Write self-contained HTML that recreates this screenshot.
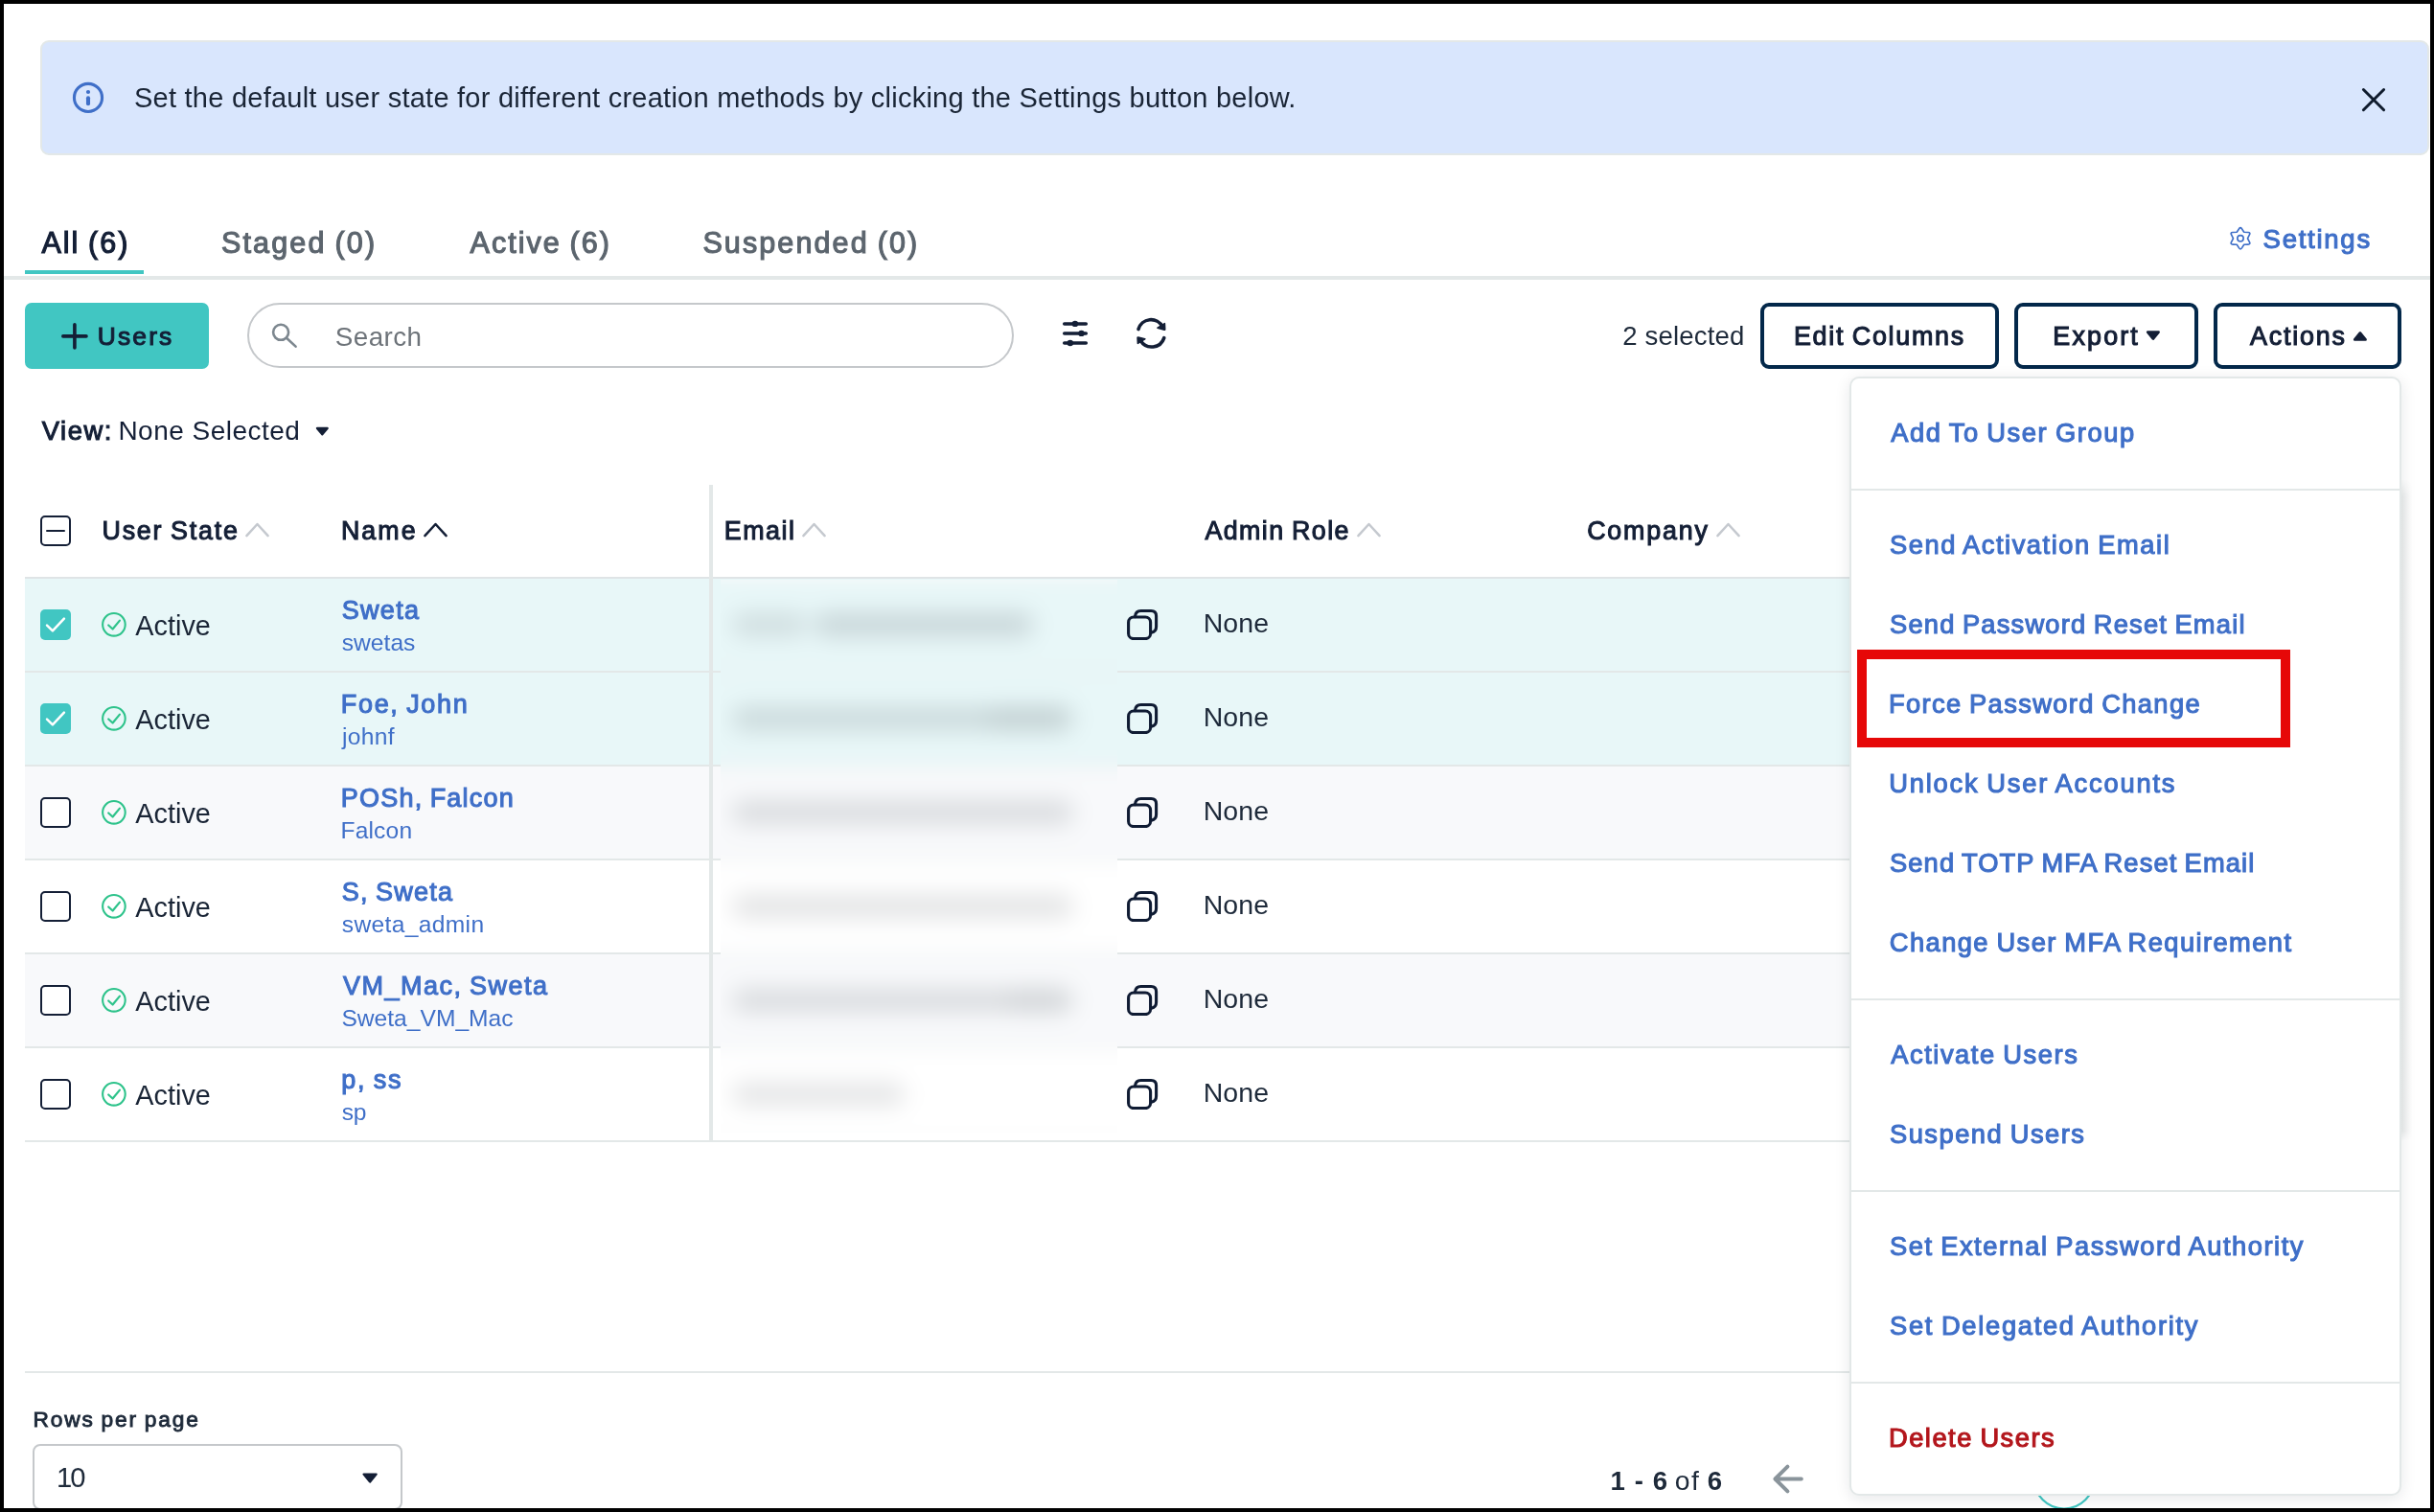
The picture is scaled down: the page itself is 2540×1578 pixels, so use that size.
<!DOCTYPE html>
<html>
<head>
<meta charset="utf-8">
<title>Users</title>
<style>
*{box-sizing:border-box;margin:0;padding:0}
html,body{width:2540px;height:1578px;overflow:hidden;background:#fff}
body{font-family:"Liberation Sans",sans-serif;color:#141f36;position:relative}
.abs{position:absolute}
.t{position:absolute;white-space:pre;line-height:1}
#frame{position:absolute;left:0;top:0;width:2540px;height:1578px;border:4px solid #000;z-index:100}
#page{position:absolute;left:0;top:0;width:2540px;height:1578px;overflow:hidden;will-change:transform}
</style>
</head>
<body>
<div id="page">
<!-- banner -->
<div class="abs" style="left:42px;top:42px;width:2493px;height:120px;background:#d9e6fd;border:2px solid #e3e8e8;border-radius:9px;"></div>
<svg class="abs" style="left:72px;top:82px;" width="40" height="40" viewBox="0 0 40 40" fill="none"><circle cx="20" cy="19.9" r="14.55" stroke="#3f6fc8" stroke-width="3.1"/><circle cx="20" cy="14" r="2.1" fill="#3f6fc8"/><path d="M20 20.3V26.2" stroke="#3f6fc8" stroke-width="4.1" stroke-linecap="round"/></svg>
<div class="t" style="left:139.98px;top:87.75px;font-size:29px;color:#1a2536;letter-spacing:0.245px;">Set the default user state for different creation methods by clicking the Settings button below.</div>
<svg class="abs" style="left:2457px;top:84px;" width="40" height="40" viewBox="0 0 40 40" fill="none"><path d="M9.4 9.5L30.6 30.7M30.6 9.5L9.4 30.7" stroke="#0f1b2d" stroke-width="3" stroke-linecap="round"/></svg>
<!-- tabs -->
<div class="abs" style="left:4px;top:288px;width:2532px;height:4px;background:#e3e8e8;"></div>
<div class="abs" style="left:26px;top:281.7px;width:124px;height:4.4px;background:#41c6c2;"></div>
<div class="t" style="left:43.52px;top:238.31px;font-size:30.5px;color:#141f36;-webkit-text-stroke:1.15px #141f36;letter-spacing:1.972px;word-spacing:-1.68px;">All (6)</div>
<div class="t" style="left:230.99px;top:238.31px;font-size:30.5px;color:#5c656e;-webkit-text-stroke:1.15px #5c656e;letter-spacing:2.154px;word-spacing:-1.68px;">Staged (0)</div>
<div class="t" style="left:490.52px;top:238.31px;font-size:30.5px;color:#5c656e;-webkit-text-stroke:1.15px #5c656e;letter-spacing:2.019px;word-spacing:-1.68px;">Active (6)</div>
<div class="t" style="left:733.39px;top:238.31px;font-size:30.5px;color:#5c656e;-webkit-text-stroke:1.15px #5c656e;letter-spacing:2.118px;word-spacing:-1.68px;">Suspended (0)</div>
<svg class="abs" style="left:2326px;top:236px;" width="24" height="26" viewBox="0 0 24 26" fill="none"><path d="M8.25 6.30 L10.58 2.71 Q12.00 0.50 13.43 2.71 L15.75 6.30 L20.03 6.52 Q22.65 6.65 21.45 8.99 L19.50 12.80 L21.45 16.61 Q22.65 18.95 20.03 19.08 L15.75 19.30 L13.43 22.89 Q12.00 25.10 10.58 22.89 L8.25 19.30 L3.97 19.08 Q1.35 18.95 2.55 16.61 L4.50 12.80 L2.55 8.99 Q1.35 6.65 3.97 6.52 Z" stroke="#3f6fc8" stroke-width="1.65" stroke-linejoin="round"/><circle cx="12" cy="12.8" r="3.15" stroke="#3f6fc8" stroke-width="1.65"/></svg>
<div class="t" style="left:2361.60px;top:235.77px;font-size:27.5px;color:#3f6fc8;-webkit-text-stroke:1.10px #3f6fc8;letter-spacing:1.740px;">Settings</div>
<!-- toolbar -->
<div class="abs" style="left:26px;top:316px;width:192px;height:68.6px;background:#41c6c2;border-radius:7px;"></div>
<svg class="abs" style="left:58px;top:331px;" width="40" height="40" viewBox="0 0 40 40" fill="none"><path d="M7.8 19.9H32M19.9 7.8V32" stroke="#141f36" stroke-width="3.6" stroke-linecap="round"/></svg>
<div class="t" style="left:101.69px;top:337.72px;font-size:26.4px;color:#141f36;-webkit-text-stroke:1.06px #141f36;letter-spacing:2.174px;">Users</div>
<div class="abs" style="left:258px;top:316px;width:800px;height:68px;background:#fff;border:2px solid #c5c8cb;border-radius:34px;"></div>
<svg class="abs" style="left:278px;top:332px;" width="40" height="40" viewBox="0 0 40 40" fill="none"><circle cx="15.1" cy="14.8" r="8" stroke="#7d878f" stroke-width="2.6"/><path d="M21 20.8L30.6 29.6" stroke="#7d878f" stroke-width="2.6" stroke-linecap="round"/></svg>
<div class="t" style="left:349.84px;top:337.67px;font-size:27.8px;color:#6d7379;letter-spacing:0.417px;">Search</div>
<svg class="abs" style="left:1102px;top:328px;" width="40" height="40" viewBox="0 0 40 40" fill="none"><path d="M8.7 9.9H31.3M8.7 19.9H31.3M8.7 30H31.3" stroke="#141f36" stroke-width="3.5" stroke-linecap="round"/><circle cx="19.9" cy="9.9" r="3.2" fill="#141f36"/><circle cx="26.5" cy="19.9" r="3.2" fill="#141f36"/><circle cx="14.8" cy="30" r="3.2" fill="#141f36"/></svg>
<svg class="abs" style="left:1181px;top:328px;" width="40" height="40" viewBox="0 0 40 40" fill="none"><g transform="translate(20.4,20)"><path d="M-13.4 -4.4A13.6 13.6 0 0 1 11.8 -7" stroke="#141f36" stroke-width="3.6" stroke-linecap="round"/><path d="M14.0 -10.3L14.3 -4.5Q14.4 -3.7 13.6 -3.9L6.6 -5.7Z" fill="#141f36" stroke="#141f36" stroke-width="1.6" stroke-linejoin="round"/><path d="M13.4 4.6A13.6 13.6 0 0 1 -11.2 7.4" stroke="#141f36" stroke-width="3.6" stroke-linecap="round"/><path d="M-14.0 10.4L-14.3 4.6Q-14.4 3.8 -13.6 4.0L-6.6 5.8Z" fill="#141f36" stroke="#141f36" stroke-width="1.6" stroke-linejoin="round"/></g></svg>
<div class="t" style="left:1693.21px;top:336.94px;font-size:27.6px;color:#1e2a3a;letter-spacing:0.150px;">2 selected</div>
<div class="abs" style="left:1836.5px;top:316px;width:249.5px;height:68.8px;background:#fff;border:4px solid #03284a;border-radius:9px;"></div>
<div class="t" style="left:1871.93px;top:337.59px;font-size:26.9px;color:#141f36;-webkit-text-stroke:1.08px #141f36;letter-spacing:1.710px;word-spacing:-1.48px;">Edit Columns</div>
<div class="abs" style="left:2102px;top:316px;width:191.5px;height:68.8px;background:#fff;border:4px solid #03284a;border-radius:9px;"></div>
<div class="t" style="left:2142.33px;top:337.59px;font-size:26.9px;color:#141f36;-webkit-text-stroke:1.08px #141f36;letter-spacing:2.156px;">Export</div>
<svg class="abs" style="left:2238px;top:344px;" width="20" height="14" viewBox="0 0 20 14" fill="none"><path d="M3.2 2.6H14.6L8.9 9.6Z" fill="#141f36" stroke="#141f36" stroke-width="2.6" stroke-linejoin="round"/></svg>
<div class="abs" style="left:2310px;top:316px;width:196px;height:68.8px;background:#fff;border:4px solid #03284a;border-radius:9px;"></div>
<div class="t" style="left:2348.09px;top:337.59px;font-size:26.9px;color:#141f36;-webkit-text-stroke:1.08px #141f36;letter-spacing:1.789px;">Actions</div>
<svg class="abs" style="left:2454px;top:344px;" width="20" height="14" viewBox="0 0 20 14" fill="none"><path d="M3.2 10.4H14.6L8.9 3.4Z" fill="#141f36" stroke="#141f36" stroke-width="2.6" stroke-linejoin="round"/></svg>
<!-- view -->
<div class="t" style="left:43.63px;top:436.34px;font-size:27.3px;color:#141f36;-webkit-text-stroke:1.09px #141f36;letter-spacing:1.614px;">View:</div>
<div class="t" style="left:123.40px;top:436.30px;font-size:28px;color:#141f36;letter-spacing:0.477px;">None Selected</div>
<svg class="abs" style="left:326.7px;top:442.2px;" width="20" height="16" viewBox="0 0 20 16" fill="none"><path d="M4 5H14.6L9.3 11.3Z" fill="#141f36" stroke="#141f36" stroke-width="2.4" stroke-linejoin="round"/></svg>
<!-- table -->
<div class="abs" style="left:26px;top:604px;width:2480px;height:96px;background:#e8f7f8;"></div>
<div class="abs" style="left:26px;top:700px;width:2480px;height:98px;background:#e8f7f8;"></div>
<div class="abs" style="left:26px;top:798px;width:2480px;height:98px;background:#f8f9fb;"></div>
<div class="abs" style="left:26px;top:896px;width:2480px;height:98px;background:#ffffff;"></div>
<div class="abs" style="left:26px;top:994px;width:2480px;height:98px;background:#f8f9fb;"></div>
<div class="abs" style="left:26px;top:1092px;width:2480px;height:98px;background:#ffffff;"></div>
<div class="abs" style="left:26px;top:602px;width:2480px;height:2.4px;background:#dfe4e6;"></div>
<div class="abs" style="left:26px;top:699.5px;width:2480px;height:2.6px;background:#e3e8e8;"></div>
<div class="abs" style="left:26px;top:797.5px;width:2480px;height:2.6px;background:#e3e8e8;"></div>
<div class="abs" style="left:26px;top:895.5px;width:2480px;height:2.6px;background:#e3e8e8;"></div>
<div class="abs" style="left:26px;top:993.5px;width:2480px;height:2.6px;background:#e3e8e8;"></div>
<div class="abs" style="left:26px;top:1091.5px;width:2480px;height:2.6px;background:#e3e8e8;"></div>
<div class="abs" style="left:26px;top:1189.5px;width:2480px;height:2.6px;background:#e3e8e8;"></div>
<div class="abs" style="left:42px;top:538px;width:32px;height:32px;background:#fff;border:2px solid #141f36;border-radius:5px;"></div>
<div class="abs" style="left:48.2px;top:552.8px;width:19.4px;height:2.5px;background:#141f36;border-radius:1.2px;"></div>
<div class="t" style="left:106.47px;top:540.78px;font-size:26.8px;color:#141f36;-webkit-text-stroke:1.07px #141f36;letter-spacing:1.806px;word-spacing:-1.47px;">User State</div>
<svg class="abs" style="left:254.5px;top:544.2px;" width="28" height="18" viewBox="0 0 28 18" fill="none"><path d="M2.4 15.2L13.5 3L24.6 15.2" stroke="#c5c9cf" stroke-width="2.5" stroke-linecap="round" stroke-linejoin="round"/></svg>
<div class="t" style="left:355.94px;top:540.78px;font-size:26.8px;color:#141f36;-webkit-text-stroke:1.07px #141f36;letter-spacing:2.076px;">Name</div>
<svg class="abs" style="left:441px;top:544.2px;" width="28" height="18" viewBox="0 0 28 18" fill="none"><path d="M2.4 15.2L13.5 3L24.6 15.2" stroke="#141f36" stroke-width="2.5" stroke-linecap="round" stroke-linejoin="round"/></svg>
<div class="t" style="left:755.74px;top:540.78px;font-size:26.8px;color:#141f36;-webkit-text-stroke:1.07px #141f36;letter-spacing:1.551px;">Email</div>
<svg class="abs" style="left:835.5px;top:544.2px;" width="28" height="18" viewBox="0 0 28 18" fill="none"><path d="M2.4 15.2L13.5 3L24.6 15.2" stroke="#c5c9cf" stroke-width="2.5" stroke-linecap="round" stroke-linejoin="round"/></svg>
<div class="t" style="left:1257.48px;top:540.78px;font-size:26.8px;color:#141f36;-webkit-text-stroke:1.07px #141f36;letter-spacing:1.435px;word-spacing:-1.47px;">Admin Role</div>
<svg class="abs" style="left:1414.8px;top:544.2px;" width="28" height="18" viewBox="0 0 28 18" fill="none"><path d="M2.4 15.2L13.5 3L24.6 15.2" stroke="#c5c9cf" stroke-width="2.5" stroke-linecap="round" stroke-linejoin="round"/></svg>
<div class="t" style="left:1656.18px;top:540.78px;font-size:26.8px;color:#141f36;-webkit-text-stroke:1.07px #141f36;letter-spacing:1.840px;">Company</div>
<svg class="abs" style="left:1790.3px;top:544.2px;" width="28" height="18" viewBox="0 0 28 18" fill="none"><path d="M2.4 15.2L13.5 3L24.6 15.2" stroke="#c5c9cf" stroke-width="2.5" stroke-linecap="round" stroke-linejoin="round"/></svg>
<div class="abs" style="left:740.4px;top:506px;width:3.4px;height:684px;background:#e3e8e8;"></div>
<div class="abs" style="left:42px;top:636px;width:32px;height:32px;background:#41c6c2;border-radius:5px;"></div>
<svg class="abs" style="left:42px;top:636px;" width="32" height="32" viewBox="0 0 32 32" fill="none"><path d="M7 16.7L12.9 22.4L24.9 9.6" stroke="#fff" stroke-width="2.5" stroke-linecap="round" stroke-linejoin="round"/></svg>
<svg class="abs" style="left:104px;top:637px;" width="30" height="30" viewBox="0 0 30 30" fill="none"><circle cx="14.9" cy="14.8" r="11.8" stroke="#2ec38b" stroke-width="2.1"/><path d="M9.2 15.5L13.6 19.5L20.9 10.6" stroke="#2ec38b" stroke-width="2.2" stroke-linecap="round" stroke-linejoin="round"/></svg>
<div class="t" style="left:141.34px;top:639.22px;font-size:28.8px;color:#1a2536;letter-spacing:0.022px;">Active</div>
<div class="t" style="left:356.81px;top:623.50px;font-size:27px;color:#3f6fc8;-webkit-text-stroke:1.08px #3f6fc8;letter-spacing:1.276px;">Sweta</div>
<div class="t" style="left:356.82px;top:659.18px;font-size:24.6px;color:#3f6fc8;">swetas</div>
<svg class="abs" style="left:1174px;top:630px;" width="38" height="38" viewBox="0 0 38 38" fill="none"><rect x="3.6" y="14" width="23" height="22.6" rx="5.4" stroke="#0f1b33" stroke-width="3.1"/><path d="M10.4 13.6Q11 7.5 16.6 7.5H27.2Q32.6 7.5 32.6 12.9V24Q32.6 29.2 27.6 30.2" stroke="#0f1b33" stroke-width="3.1" stroke-linecap="round"/></svg>
<div class="t" style="left:1255.66px;top:635.97px;font-size:28.5px;color:#1e2a3a;letter-spacing:0.124px;">None</div>
<div class="abs" style="left:42px;top:734px;width:32px;height:32px;background:#41c6c2;border-radius:5px;"></div>
<svg class="abs" style="left:42px;top:734px;" width="32" height="32" viewBox="0 0 32 32" fill="none"><path d="M7 16.7L12.9 22.4L24.9 9.6" stroke="#fff" stroke-width="2.5" stroke-linecap="round" stroke-linejoin="round"/></svg>
<svg class="abs" style="left:104px;top:735px;" width="30" height="30" viewBox="0 0 30 30" fill="none"><circle cx="14.9" cy="14.8" r="11.8" stroke="#2ec38b" stroke-width="2.1"/><path d="M9.2 15.5L13.6 19.5L20.9 10.6" stroke="#2ec38b" stroke-width="2.2" stroke-linecap="round" stroke-linejoin="round"/></svg>
<div class="t" style="left:141.34px;top:737.22px;font-size:28.8px;color:#1a2536;letter-spacing:0.022px;">Active</div>
<div class="t" style="left:355.83px;top:721.50px;font-size:27px;color:#3f6fc8;-webkit-text-stroke:1.08px #3f6fc8;letter-spacing:1.662px;word-spacing:-1.49px;">Foe, John</div>
<div class="t" style="left:356.90px;top:757.18px;font-size:24.6px;color:#3f6fc8;letter-spacing:0.330px;">johnf</div>
<svg class="abs" style="left:1174px;top:728px;" width="38" height="38" viewBox="0 0 38 38" fill="none"><rect x="3.6" y="14" width="23" height="22.6" rx="5.4" stroke="#0f1b33" stroke-width="3.1"/><path d="M10.4 13.6Q11 7.5 16.6 7.5H27.2Q32.6 7.5 32.6 12.9V24Q32.6 29.2 27.6 30.2" stroke="#0f1b33" stroke-width="3.1" stroke-linecap="round"/></svg>
<div class="t" style="left:1255.66px;top:733.97px;font-size:28.5px;color:#1e2a3a;letter-spacing:0.124px;">None</div>
<div class="abs" style="left:42px;top:832px;width:32px;height:32px;background:#fff;border:2px solid #141f36;border-radius:5px;"></div>
<svg class="abs" style="left:104px;top:833px;" width="30" height="30" viewBox="0 0 30 30" fill="none"><circle cx="14.9" cy="14.8" r="11.8" stroke="#2ec38b" stroke-width="2.1"/><path d="M9.2 15.5L13.6 19.5L20.9 10.6" stroke="#2ec38b" stroke-width="2.2" stroke-linecap="round" stroke-linejoin="round"/></svg>
<div class="t" style="left:141.34px;top:835.22px;font-size:28.8px;color:#1a2536;letter-spacing:0.022px;">Active</div>
<div class="t" style="left:355.83px;top:819.50px;font-size:27px;color:#3f6fc8;-webkit-text-stroke:1.08px #3f6fc8;letter-spacing:1.209px;word-spacing:-1.49px;">POSh, Falcon</div>
<div class="t" style="left:355.48px;top:855.18px;font-size:24.6px;color:#3f6fc8;letter-spacing:0.156px;">Falcon</div>
<svg class="abs" style="left:1174px;top:826px;" width="38" height="38" viewBox="0 0 38 38" fill="none"><rect x="3.6" y="14" width="23" height="22.6" rx="5.4" stroke="#0f1b33" stroke-width="3.1"/><path d="M10.4 13.6Q11 7.5 16.6 7.5H27.2Q32.6 7.5 32.6 12.9V24Q32.6 29.2 27.6 30.2" stroke="#0f1b33" stroke-width="3.1" stroke-linecap="round"/></svg>
<div class="t" style="left:1255.66px;top:831.97px;font-size:28.5px;color:#1e2a3a;letter-spacing:0.124px;">None</div>
<div class="abs" style="left:42px;top:930px;width:32px;height:32px;background:#fff;border:2px solid #141f36;border-radius:5px;"></div>
<svg class="abs" style="left:104px;top:931px;" width="30" height="30" viewBox="0 0 30 30" fill="none"><circle cx="14.9" cy="14.8" r="11.8" stroke="#2ec38b" stroke-width="2.1"/><path d="M9.2 15.5L13.6 19.5L20.9 10.6" stroke="#2ec38b" stroke-width="2.2" stroke-linecap="round" stroke-linejoin="round"/></svg>
<div class="t" style="left:141.34px;top:933.22px;font-size:28.8px;color:#1a2536;letter-spacing:0.022px;">Active</div>
<div class="t" style="left:356.81px;top:917.50px;font-size:27px;color:#3f6fc8;-webkit-text-stroke:1.08px #3f6fc8;letter-spacing:1.225px;word-spacing:-1.49px;">S, Sweta</div>
<div class="t" style="left:356.82px;top:953.18px;font-size:24.6px;color:#3f6fc8;letter-spacing:0.334px;">sweta_admin</div>
<svg class="abs" style="left:1174px;top:924px;" width="38" height="38" viewBox="0 0 38 38" fill="none"><rect x="3.6" y="14" width="23" height="22.6" rx="5.4" stroke="#0f1b33" stroke-width="3.1"/><path d="M10.4 13.6Q11 7.5 16.6 7.5H27.2Q32.6 7.5 32.6 12.9V24Q32.6 29.2 27.6 30.2" stroke="#0f1b33" stroke-width="3.1" stroke-linecap="round"/></svg>
<div class="t" style="left:1255.66px;top:929.97px;font-size:28.5px;color:#1e2a3a;letter-spacing:0.124px;">None</div>
<div class="abs" style="left:42px;top:1028px;width:32px;height:32px;background:#fff;border:2px solid #141f36;border-radius:5px;"></div>
<svg class="abs" style="left:104px;top:1029px;" width="30" height="30" viewBox="0 0 30 30" fill="none"><circle cx="14.9" cy="14.8" r="11.8" stroke="#2ec38b" stroke-width="2.1"/><path d="M9.2 15.5L13.6 19.5L20.9 10.6" stroke="#2ec38b" stroke-width="2.2" stroke-linecap="round" stroke-linejoin="round"/></svg>
<div class="t" style="left:141.34px;top:1031.22px;font-size:28.8px;color:#1a2536;letter-spacing:0.022px;">Active</div>
<div class="t" style="left:357.92px;top:1015.50px;font-size:27px;color:#3f6fc8;-webkit-text-stroke:1.08px #3f6fc8;letter-spacing:1.496px;word-spacing:-1.49px;">VM_Mac, Sweta</div>
<div class="t" style="left:356.38px;top:1051.18px;font-size:24.6px;color:#3f6fc8;letter-spacing:0.014px;">Sweta_VM_Mac</div>
<svg class="abs" style="left:1174px;top:1022px;" width="38" height="38" viewBox="0 0 38 38" fill="none"><rect x="3.6" y="14" width="23" height="22.6" rx="5.4" stroke="#0f1b33" stroke-width="3.1"/><path d="M10.4 13.6Q11 7.5 16.6 7.5H27.2Q32.6 7.5 32.6 12.9V24Q32.6 29.2 27.6 30.2" stroke="#0f1b33" stroke-width="3.1" stroke-linecap="round"/></svg>
<div class="t" style="left:1255.66px;top:1027.97px;font-size:28.5px;color:#1e2a3a;letter-spacing:0.124px;">None</div>
<div class="abs" style="left:42px;top:1126px;width:32px;height:32px;background:#fff;border:2px solid #141f36;border-radius:5px;"></div>
<svg class="abs" style="left:104px;top:1127px;" width="30" height="30" viewBox="0 0 30 30" fill="none"><circle cx="14.9" cy="14.8" r="11.8" stroke="#2ec38b" stroke-width="2.1"/><path d="M9.2 15.5L13.6 19.5L20.9 10.6" stroke="#2ec38b" stroke-width="2.2" stroke-linecap="round" stroke-linejoin="round"/></svg>
<div class="t" style="left:141.34px;top:1129.22px;font-size:28.8px;color:#1a2536;letter-spacing:0.022px;">Active</div>
<div class="t" style="left:356.30px;top:1113.50px;font-size:27px;color:#3f6fc8;-webkit-text-stroke:1.08px #3f6fc8;letter-spacing:1.650px;word-spacing:-1.49px;">p, ss</div>
<div class="t" style="left:356.82px;top:1149.18px;font-size:24.6px;color:#3f6fc8;letter-spacing:-0.264px;">sp</div>
<svg class="abs" style="left:1174px;top:1120px;" width="38" height="38" viewBox="0 0 38 38" fill="none"><rect x="3.6" y="14" width="23" height="22.6" rx="5.4" stroke="#0f1b33" stroke-width="3.1"/><path d="M10.4 13.6Q11 7.5 16.6 7.5H27.2Q32.6 7.5 32.6 12.9V24Q32.6 29.2 27.6 30.2" stroke="#0f1b33" stroke-width="3.1" stroke-linecap="round"/></svg>
<div class="t" style="left:1255.66px;top:1125.97px;font-size:28.5px;color:#1e2a3a;letter-spacing:0.124px;">None</div>
<!-- blurred emails -->
<div class="abs" style="left:752px;top:605px;width:414px;height:577px;overflow:hidden">
<div class="abs" style="left:-60px;top:-60px;width:534px;height:697px;background:#fff;filter:blur(10px)">
<div class="abs" style="left:0px;top:59px;width:534px;height:96px;background:#e8f7f8;"></div>
<div class="abs" style="left:0px;top:155px;width:534px;height:98px;background:#e8f7f8;"></div>
<div class="abs" style="left:0px;top:253px;width:534px;height:98px;background:#f8f9fb;"></div>
<div class="abs" style="left:0px;top:351px;width:534px;height:98px;background:#ffffff;"></div>
<div class="abs" style="left:0px;top:449px;width:534px;height:98px;background:#f8f9fb;"></div>
<div class="abs" style="left:0px;top:547px;width:534px;height:98px;background:#ffffff;"></div>
<div class="abs" style="left:0px;top:57px;width:534px;height:2.4px;background:#dfe4e6;"></div>
<div class="abs" style="left:0px;top:154.5px;width:534px;height:2.6px;background:#e3e8e8;"></div>
<div class="abs" style="left:0px;top:252.5px;width:534px;height:2.6px;background:#e3e8e8;"></div>
<div class="abs" style="left:0px;top:350.5px;width:534px;height:2.6px;background:#e3e8e8;"></div>
<div class="abs" style="left:0px;top:448.5px;width:534px;height:2.6px;background:#e3e8e8;"></div>
<div class="abs" style="left:0px;top:546.5px;width:534px;height:2.6px;background:#e3e8e8;"></div>
<div class="abs" style="left:0px;top:644.5px;width:534px;height:2.6px;background:#e3e8e8;"></div>
<div class="abs" style="left:72px;top:95px;width:78px;height:24px;background:rgba(30,40,48,0.12);border-radius:12px;filter:blur(7px);"></div>
<div class="abs" style="left:158px;top:95px;width:228px;height:24px;background:rgba(30,40,48,0.16);border-radius:12px;filter:blur(7px);"></div>
<div class="abs" style="left:72px;top:193px;width:356px;height:24px;background:rgba(30,40,48,0.145);border-radius:12px;filter:blur(7px);"></div>
<div class="abs" style="left:338px;top:193px;width:84px;height:24px;background:rgba(30,40,48,0.05);border-radius:12px;filter:blur(7px);"></div>
<div class="abs" style="left:72px;top:291px;width:356px;height:24px;background:rgba(30,40,48,0.14);border-radius:12px;filter:blur(7px);"></div>
<div class="abs" style="left:72px;top:389px;width:356px;height:24px;background:rgba(30,40,48,0.13);border-radius:12px;filter:blur(7px);"></div>
<div class="abs" style="left:72px;top:487px;width:356px;height:24px;background:rgba(30,40,48,0.14);border-radius:12px;filter:blur(7px);"></div>
<div class="abs" style="left:358px;top:487px;width:64px;height:24px;background:rgba(30,40,48,0.04);border-radius:12px;filter:blur(7px);"></div>
<div class="abs" style="left:72px;top:585px;width:180px;height:24px;background:rgba(30,40,48,0.12);border-radius:12px;filter:blur(7px);"></div>
</div>
</div>
<!-- footer -->
<div class="abs" style="left:26px;top:1430.5px;width:2480px;height:2.4px;background:#e3e8e8;"></div>
<div class="t" style="left:34.49px;top:1470.23px;font-size:22.7px;color:#1e2a3a;-webkit-text-stroke:0.91px #1e2a3a;letter-spacing:1.848px;word-spacing:-1.25px;">Rows per page</div>
<div class="abs" style="left:33.6px;top:1507.4px;width:386px;height:68.2px;background:#fff;border:2px solid #c5c8cb;border-radius:8px;"></div>
<div class="t" style="left:59.08px;top:1527.58px;font-size:29.2px;color:#1e2a3a;letter-spacing:-2.115px;">10</div>
<svg class="abs" style="left:376px;top:1532.9px;" width="22" height="18" viewBox="0 0 22 18" fill="none"><path d="M3.6 5.6H16.6L10.1 13.4Z" fill="#141f36" stroke="#141f36" stroke-width="2.4" stroke-linejoin="round"/></svg>
<div class="t" style="left:1680.46px;top:1531.64px;font-size:27.6px;color:#1e2a3a;font-weight:700;letter-spacing:1.127px;">1 - 6</div>
<div class="t" style="left:1747.71px;top:1530.96px;font-size:28.4px;color:#1e2a3a;letter-spacing:1.566px;">of</div>
<div class="t" style="left:1781.79px;top:1531.64px;font-size:27.6px;color:#1e2a3a;font-weight:700;">6</div>
<svg class="abs" style="left:1846px;top:1524px;" width="40" height="40" viewBox="0 0 40 40" fill="none"><path d="M33.8 19.5H6.6M19.4 6.6L6.4 19.5L19.4 32.4" stroke="#8a949b" stroke-width="4" stroke-linecap="round" stroke-linejoin="round"/></svg>
<svg class="abs" style="left:2120px;top:1508.5px;" width="68" height="68" viewBox="0 0 68 68" fill="none"><circle cx="34" cy="34" r="31.5" stroke="#41c6c2" stroke-width="2.2"/></svg>
<div class="abs" style="left:2505px;top:500px;width:13px;height:691px;background:linear-gradient(to right,rgba(110,125,125,.15),rgba(110,125,125,0));-webkit-mask-image:linear-gradient(to bottom,transparent 0,#000 18px,#000 680px,transparent 691px);mask-image:linear-gradient(to bottom,transparent 0,#000 18px,#000 680px,transparent 691px);"></div>
<!-- dropdown -->
<div class="abs" style="left:1930px;top:393px;width:576px;height:1168px;background:#fff;border:2px solid #e3e8e8;border-radius:10px;box-shadow:0 3px 16px rgba(20,30,40,.10);"></div>
<div class="t" style="left:1973.19px;top:438.24px;font-size:27.3px;color:#3f6fc8;-webkit-text-stroke:1.09px #3f6fc8;letter-spacing:1.577px;word-spacing:-1.50px;">Add To User Group</div>
<div class="t" style="left:1972.01px;top:555.34px;font-size:27.3px;color:#3f6fc8;-webkit-text-stroke:1.09px #3f6fc8;letter-spacing:1.537px;word-spacing:-1.50px;">Send Activation Email</div>
<div class="t" style="left:1972.01px;top:638.14px;font-size:27.3px;color:#3f6fc8;-webkit-text-stroke:1.09px #3f6fc8;letter-spacing:1.213px;word-spacing:-1.50px;">Send Password Reset Email</div>
<div class="t" style="left:1971.01px;top:721.24px;font-size:27.3px;color:#3f6fc8;-webkit-text-stroke:1.09px #3f6fc8;letter-spacing:1.361px;word-spacing:-1.50px;">Force Password Change</div>
<div class="t" style="left:1971.14px;top:804.24px;font-size:27.3px;color:#3f6fc8;-webkit-text-stroke:1.09px #3f6fc8;letter-spacing:1.808px;word-spacing:-1.50px;">Unlock User Accounts</div>
<div class="t" style="left:1972.01px;top:887.34px;font-size:27.3px;color:#3f6fc8;-webkit-text-stroke:1.09px #3f6fc8;letter-spacing:1.115px;word-spacing:-1.50px;">Send TOTP MFA Reset Email</div>
<div class="t" style="left:1971.86px;top:970.44px;font-size:27.3px;color:#3f6fc8;-webkit-text-stroke:1.09px #3f6fc8;letter-spacing:1.414px;word-spacing:-1.50px;">Change User MFA Requirement</div>
<div class="t" style="left:1973.19px;top:1087.34px;font-size:27.3px;color:#3f6fc8;-webkit-text-stroke:1.09px #3f6fc8;letter-spacing:1.551px;word-spacing:-1.50px;">Activate Users</div>
<div class="t" style="left:1972.01px;top:1170.14px;font-size:27.3px;color:#3f6fc8;-webkit-text-stroke:1.09px #3f6fc8;letter-spacing:1.491px;word-spacing:-1.50px;">Suspend Users</div>
<div class="t" style="left:1972.01px;top:1287.34px;font-size:27.3px;color:#3f6fc8;-webkit-text-stroke:1.09px #3f6fc8;letter-spacing:1.534px;word-spacing:-1.50px;">Set External Password Authority</div>
<div class="t" style="left:1972.01px;top:1369.94px;font-size:27.3px;color:#3f6fc8;-webkit-text-stroke:1.09px #3f6fc8;letter-spacing:1.712px;word-spacing:-1.50px;">Set Delegated Authority</div>
<div class="t" style="left:1971.01px;top:1487.04px;font-size:27.3px;color:#b3161c;-webkit-text-stroke:1.09px #b3161c;letter-spacing:1.486px;word-spacing:-1.50px;">Delete Users</div>
<div class="abs" style="left:1932px;top:510px;width:572px;height:2px;background:#e3e8e8;"></div>
<div class="abs" style="left:1932px;top:1042px;width:572px;height:2px;background:#e3e8e8;"></div>
<div class="abs" style="left:1932px;top:1242px;width:572px;height:2px;background:#e3e8e8;"></div>
<div class="abs" style="left:1932px;top:1442px;width:572px;height:2px;background:#e3e8e8;"></div>
<div class="abs" style="left:1938px;top:678px;width:452px;height:102px;background:transparent;border:10px solid #e60808;"></div>
</div>
<div id="frame"></div>
</body>
</html>
